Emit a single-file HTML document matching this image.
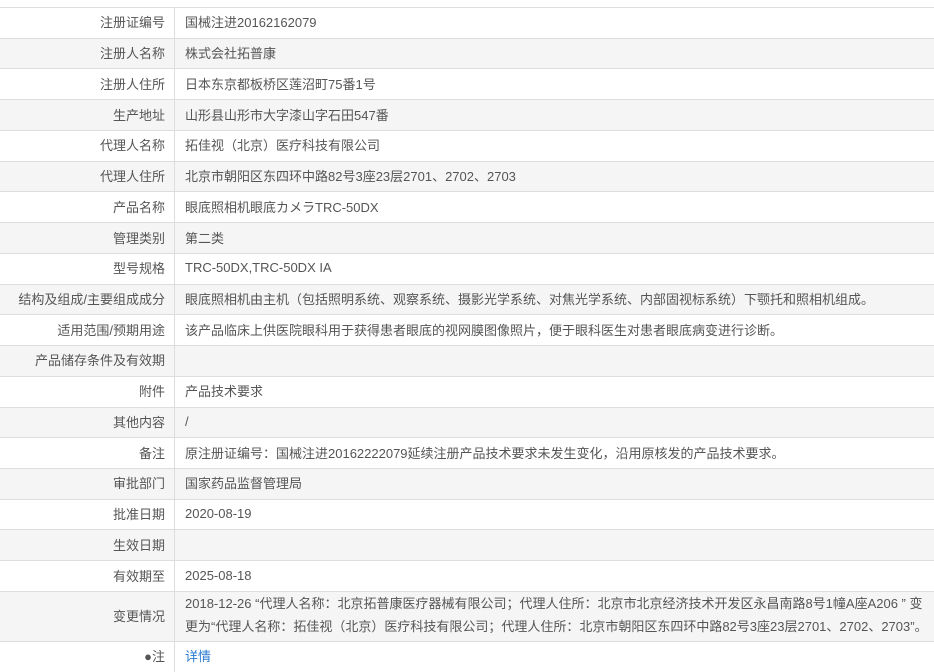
<!DOCTYPE html>
<html><head><meta charset="utf-8"><style>
body{margin:0;background:#fff;width:934px;height:657px;overflow:hidden;font-family:"Liberation Sans","Noto Sans CJK SC",sans-serif;font-size:13px;color:#555;}
.t{position:absolute;top:7px;left:0;width:934px;}
.r{display:flex;height:30.74px;box-sizing:border-box;border-top:1px solid #ddd;}
.r:nth-child(even){background:#f5f5f5;}
.l{width:175px;box-sizing:border-box;text-align:right;padding-right:9px;padding-bottom:2px;border-right:1px solid #ddd;display:flex;align-items:center;justify-content:flex-end;white-space:nowrap;}
.v{padding-left:10px;padding-bottom:2px;display:flex;align-items:center;white-space:nowrap;}
.r.big{height:50px;}
.r.big .v{line-height:23px;}
a{color:#2a7ad2;text-decoration:none;}
</style></head><body>
<div class="t">
<div class="r"><div class="l">注册证编号</div><div class="v">国械注进20162162079</div></div>
<div class="r"><div class="l">注册人名称</div><div class="v">株式会社拓普康</div></div>
<div class="r"><div class="l">注册人住所</div><div class="v">日本东京都板桥区莲沼町75番1号</div></div>
<div class="r"><div class="l">生产地址</div><div class="v">山形县山形市大字漆山字石田547番</div></div>
<div class="r"><div class="l">代理人名称</div><div class="v">拓佳视（北京）医疗科技有限公司</div></div>
<div class="r"><div class="l">代理人住所</div><div class="v">北京市朝阳区东四环中路82号3座23层2701、2702、2703</div></div>
<div class="r"><div class="l">产品名称</div><div class="v">眼底照相机眼底カメラTRC-50DX</div></div>
<div class="r"><div class="l">管理类别</div><div class="v">第二类</div></div>
<div class="r"><div class="l">型号规格</div><div class="v">TRC-50DX,TRC-50DX IA</div></div>
<div class="r"><div class="l">结构及组成/主要组成成分</div><div class="v">眼底照相机由主机（包括照明系统、观察系统、摄影光学系统、对焦光学系统、内部固视标系统）下颚托和照相机组成。</div></div>
<div class="r"><div class="l">适用范围/预期用途</div><div class="v">该产品临床上供医院眼科用于获得患者眼底的视网膜图像照片，便于眼科医生对患者眼底病变进行诊断。</div></div>
<div class="r"><div class="l">产品储存条件及有效期</div><div class="v"></div></div>
<div class="r"><div class="l">附件</div><div class="v">产品技术要求</div></div>
<div class="r"><div class="l">其他内容</div><div class="v">/</div></div>
<div class="r"><div class="l">备注</div><div class="v">原注册证编号：国械注进20162222079延续注册产品技术要求未发生变化，沿用原核发的产品技术要求。</div></div>
<div class="r"><div class="l">审批部门</div><div class="v">国家药品监督管理局</div></div>
<div class="r"><div class="l">批准日期</div><div class="v">2020-08-19</div></div>
<div class="r"><div class="l">生效日期</div><div class="v"></div></div>
<div class="r"><div class="l">有效期至</div><div class="v">2025-08-18</div></div>
<div class="r big"><div class="l">变更情况</div><div class="v">2018-12-26 “代理人名称：北京拓普康医疗器械有限公司；代理人住所：北京市北京经济技术开发区永昌南路8号1幢A座A206 ” 变<br>更为“代理人名称：拓佳视（北京）医疗科技有限公司；代理人住所：北京市朝阳区东四环中路82号3座23层2701、2702、2703”。</div></div>
<div class="r"><div class="l">●注</div><div class="v"><a>详情</a></div></div>
</div>
</body></html>
